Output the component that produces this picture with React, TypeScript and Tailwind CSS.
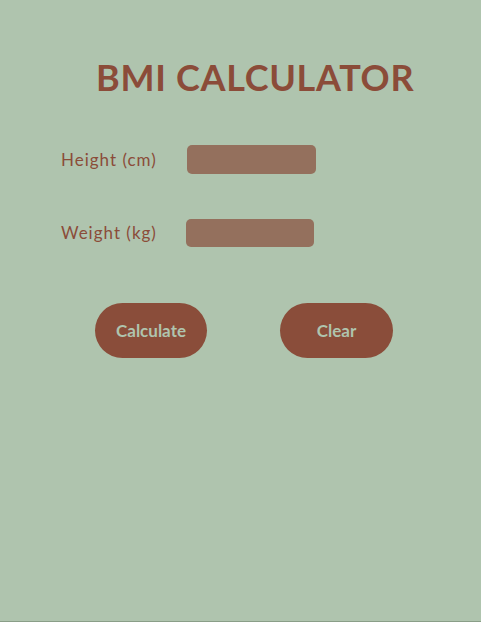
export default function App() {
  return (
    <div className="w-[481px] h-[622px] bg-[#afc4ae] border-b border-[#8a9e88] flex flex-col" style={{ fontFamily: "Lato, 'Open Sans', sans-serif" }}>
      <h1 className="mt-[54px] ml-[96px] w-[320px] text-[36px] leading-[46px] font-bold text-[#8b4c39] tracking-[0.7px] whitespace-nowrap">BMI CALCULATOR</h1>
      <div className="mt-[45px] ml-[61px] flex items-center h-[29px]">
        <label className="w-[126px] text-[17px] text-[#8b4c39] tracking-[1px]">Height (cm)</label>
        <input className="w-[129px] h-[29px] rounded-[5px] bg-[#94705d] outline-none" />
      </div>
      <div className="mt-[45px] ml-[61px] flex items-center h-[28px]">
        <label className="w-[125px] text-[17px] text-[#8b4c39] tracking-[1px]">Weight (kg)</label>
        <input className="w-[128px] h-[28px] rounded-[5px] bg-[#94705d] outline-none" />
      </div>
      <div className="mt-[56px] ml-[95px] flex gap-[73px]">
        <button className="w-[112px] h-[55px] rounded-full bg-[#8a4d3a] text-[#afc4ae] text-[17px] font-bold">Calculate</button>
        <button className="w-[113px] h-[55px] rounded-full bg-[#8a4d3a] text-[#afc4ae] text-[17px] font-bold">Clear</button>
      </div>
    </div>
  );
}
